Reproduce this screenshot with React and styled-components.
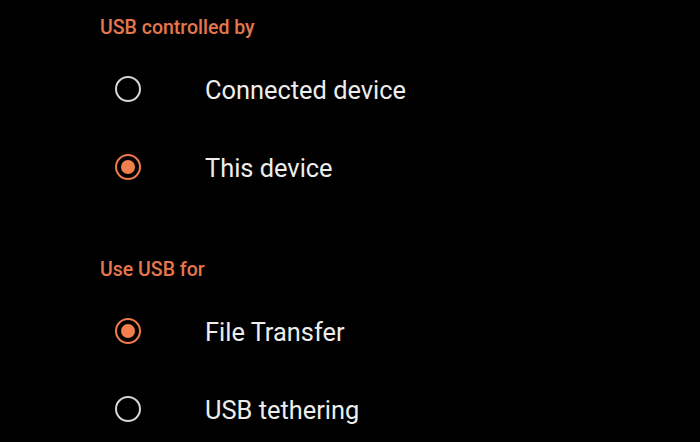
import React from "react";
import styled, { createGlobalStyle } from "styled-components";

const Global = createGlobalStyle`
  html, body { margin: 0; padding: 0; background: #000; }
  body { font-family: Roboto, "Noto Sans", sans-serif; -webkit-font-smoothing: antialiased; }
`;

const Page = styled.div`
  width: 700px;
  height: 442px;
  overflow: hidden;
  background: #000;
  padding-left: 100px;
  box-sizing: border-box;
`;

const Section = styled.section`
  display: flex;
  flex-direction: column;
  margin-top: ${(p) => (p.$first ? "0" : "36px")};
`;

const Header = styled.div`
  padding: 17px 0 11px;
  font-size: 19.5px;
  line-height: 22px;
  font-weight: 500;
  color: #e5774d;
`;

const Row = styled.div`
  height: 78px;
  display: flex;
  align-items: center;
  gap: 64px;
  padding-left: 15px;
`;

const Radio = styled.span`
  width: 26px;
  height: 26px;
  box-sizing: border-box;
  border-radius: 50%;
  border: ${(p) => (p.$checked ? "2.5px solid #ef7a4c" : "2px solid #d6d6d6")};
  display: flex;
  align-items: center;
  justify-content: center;
  flex: none;
  &::after {
    content: "";
    display: ${(p) => (p.$checked ? "block" : "none")};
    width: 14px;
    height: 14px;
    border-radius: 50%;
    background: #f37e4d;
  }
`;

const Label = styled.span`
  font-size: 25.4px;
  line-height: 30px;
  margin-top: 2px;
  color: #ededed;
  font-weight: 400;
`;

const groups = [
  { title: "USB controlled by", options: [["Connected device", false], ["This device", true]] },
  { title: "Use USB for", options: [["File Transfer", true], ["USB tethering", false]] },
];

export default function App() {
  return (
    <Page>
      <Global />
      {groups.map((g, i) => (
        <Section key={g.title} $first={i === 0}>
          <Header>{g.title}</Header>
          {g.options.map(([label, checked]) => (
            <Row key={label}>
              <Radio $checked={checked} />
              <Label>{label}</Label>
            </Row>
          ))}
        </Section>
      ))}
    </Page>
  );
}
